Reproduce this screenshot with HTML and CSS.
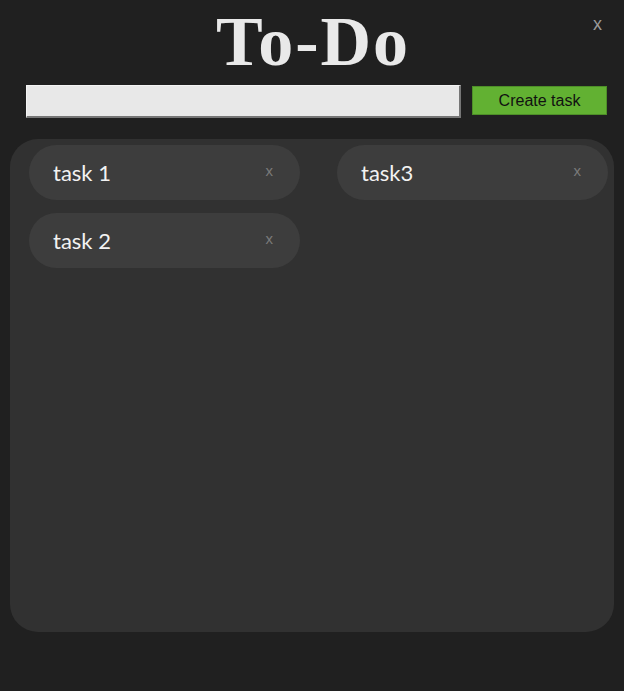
FILE: index.html
```html
<!DOCTYPE html>
<html lang="en">
<head>
<meta charset="utf-8">
<title>To-Do</title>
<link rel="stylesheet" href="styles.css">
</head>
<body>
<div class="app">
  <span class="app-close">x</span>
  <h1 class="title">To-Do</h1>
  <div class="new-task">
    <input class="task-input" type="text">
    <button class="create-btn">Create task</button>
  </div>
  <div class="board">
    <div class="column">
      <div class="task"><span class="task-name">task 1</span><span class="task-close">x</span></div>
      <div class="task"><span class="task-name">task 2</span><span class="task-close">x</span></div>
    </div>
    <div class="column">
      <div class="task"><span class="task-name">task3</span><span class="task-close">x</span></div>
    </div>
  </div>
</div>
</body>
</html>
```

FILE: styles.css
```css
html, body {
  margin: 0;
  padding: 0;
  background: #202020;
}
.app {
  position: relative;
  width: 624px;
  height: 691px;
  display: flex;
  flex-direction: column;
  align-items: stretch;
}
.app-close {
  position: absolute;
  top: 12px;
  left: 593px;
  font-family: "Liberation Sans", Arial, sans-serif;
  font-size: 18px;
  line-height: 24px;
  color: #9a9a9a;
}
.title {
  margin: 7px 0 0 0;
  font-family: "Liberation Serif", "Times New Roman", serif;
  font-weight: bold;
  font-size: 70px;
  line-height: 69px;
  letter-spacing: 2px;
  padding-left: 2px;
  color: #e9e9e9;
  text-align: center;
}
.new-task {
  display: flex;
  align-items: flex-start;
  margin: 9px 0 0 26px;
  gap: 11px;
}
.task-input {
  box-sizing: border-box;
  width: 435px;
  height: 33px;
  margin: 0;
  padding: 0 4px;
  background: #e8e8e8;
  border-style: solid;
  border-width: 1px 2px 2px 1px;
  border-color: #f4f4f4 #767676 #767676 #f4f4f4;
  outline: none;
}
.create-btn {
  box-sizing: border-box;
  width: 135px;
  height: 29px;
  margin: 1px 0 0 0;
  padding: 0;
  background: #62b132;
  border: 1px solid #4e8f28;
  font-family: "Liberation Sans", Arial, sans-serif;
  font-size: 16px;
  color: #111;
}
.board {
  box-sizing: border-box;
  margin: 21px 10px 0 10px;
  height: 493px;
  background: #313131;
  border-radius: 28px;
  padding: 6px 6px 0 19px;
  display: flex;
  gap: 37px;
}
.column {
  width: 271px;
  display: flex;
  flex-direction: column;
  gap: 13px;
}
.task {
  box-sizing: border-box;
  height: 55px;
  border-radius: 28px;
  background: #3d3d3d;
  display: flex;
  align-items: center;
  justify-content: space-between;
  padding: 0 27px 0 24px;
}
.task-name {
  font-family: Lato, "Open Sans", sans-serif;
  font-size: 22px;
  color: #f2f2f2;
  margin-top: -1px;
}
.task-close {
  font-family: "Liberation Sans", Arial, sans-serif;
  font-size: 15px;
  color: #7a7a7a;
  margin-top: -5px;
}
```
